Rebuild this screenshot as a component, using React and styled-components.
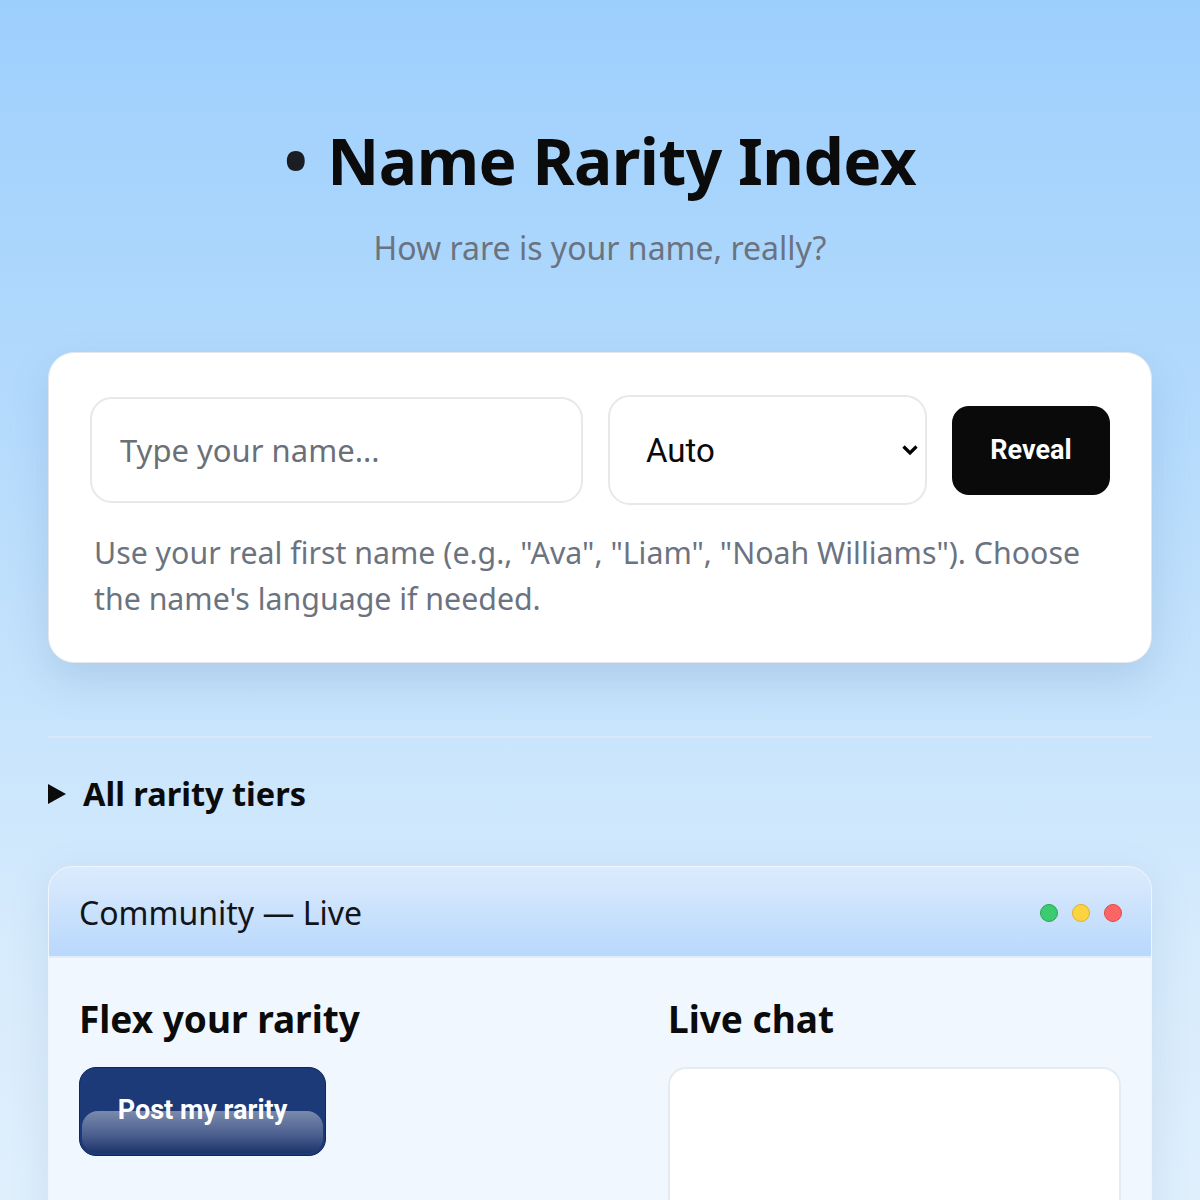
import React from "react";
import styled, { createGlobalStyle } from "styled-components";

const Global = createGlobalStyle`
  html, body { margin: 0; padding: 0; }
  body {
    font-family: "Noto Sans", "Open Sans", sans-serif;
    background: linear-gradient(180deg, #9dcffd 0%, #b9ddfc 40%, #d6ebfc 75%, #e2f0fc 100%);
    min-height: 1200px;
    color: #0b0b0c;
  }
`;

const Page = styled.main`
  width: 1104px;
  margin: 0 auto;
  padding-top: 124px;
`;

const Hero = styled.header`
  text-align: center;
`;

const Title = styled.h1`
  margin: 0;
  font-size: 64px;
  font-weight: 700;
  line-height: 74px;
  letter-spacing: -0.5px;
  color: #0b0b0c;
`;

const Bullet = styled.span`
  color: #1a1d22;
  margin-right: 20px;
`;

const Subtitle = styled.p`
  margin: 28px 0 0;
  font-size: 32px;
  line-height: 44px;
  color: #6b7380;
`;

const Card = styled.section`
  margin-top: 82px;
  background: #ffffff;
  border: 1px solid #e3e7ec;
  border-radius: 26px;
  box-shadow: 0 18px 40px rgba(70, 110, 160, 0.18);
  padding: 42px 41px 40px;
`;

const FormRow = styled.div`
  display: flex;
  align-items: center;
  gap: 25px;
`;

const NameInput = styled.input`
  flex: none;
  width: 493px;
  min-width: 0;
  box-sizing: border-box;
  height: 106px;
  border: 2px solid #e6e8eb;
  border-radius: 22px;
  padding: 0 28px;
  font-family: "Noto Sans", sans-serif;
  font-size: 31px;
  color: #111;
  outline: none;
  &::placeholder { color: #6b6f77; }
`;

const SelectWrap = styled.div`
  position: relative;
  flex: none;
  width: 319px;
`;

const Select = styled.select`
  width: 100%;
  box-sizing: border-box;
  height: 110px;
  border: 2px solid #e6e8eb;
  border-radius: 22px;
  padding: 0 36px;
  font-family: Roboto, sans-serif;
  font-size: 33px;
  color: #0a0a0a;
  background: #fff;
  appearance: none;
  outline: none;
`;

const Chevron = styled.svg`
  position: absolute;
  right: 8px;
  top: 50%;
  transform: translateY(-50%);
  pointer-events: none;
`;

const RevealButton = styled.button`
  flex: none;
  width: 158px;
  height: 89px;
  border: none;
  border-radius: 17px;
  background: #0a0a0a;
  color: #fff;
  font-family: Roboto, sans-serif;
  font-weight: 700;
  font-size: 27px;
`;

const Hint = styled.p`
  margin: 25px 0 0 4px;
  font-size: 30.3px;
  line-height: 46px;
  color: #6b7380;
`;

const Divider = styled.hr`
  margin: 73px 0 0;
  border: none;
  border-top: 2px solid #d9e8f6;
`;

const Tiers = styled.details`
  margin-top: 35px;
`;

const TiersSummary = styled.summary`
  list-style: none;
  display: flex;
  align-items: center;
  gap: 17px;
  font-size: 32.5px;
  font-weight: 700;
  line-height: 42px;
  cursor: pointer;
  &::-webkit-details-marker { display: none; }
`;

const Window = styled.section`
  margin-top: 51px;
  border: 1px solid #eef5fd;
  border-radius: 24px 24px 0 0;
  overflow: hidden;
  background: #f1f7fe;
  box-shadow: 0 10px 40px rgba(80, 120, 170, 0.14);
`;

const WindowBar = styled.div`
  height: 91px;
  display: flex;
  align-items: center;
  justify-content: space-between;
  padding: 2px 29px 0 30px;
  box-sizing: border-box;
  background: linear-gradient(180deg, #dcebfd 0%, #b9d8fc 100%);
  border-bottom: 2px solid #e2edf9;
`;

const WindowTitle = styled.div`
  font-size: 32px;
  color: #111418;
`;

const Dots = styled.div`
  display: flex;
  gap: 14px;
`;

const Dot = styled.span`
  flex: none;
  width: 18px;
  height: 18px;
  box-sizing: border-box;
  border-radius: 50%;
  background: ${(p) => p.$fill};
  border: 1px solid ${(p) => p.$edge};
`;

const WindowBody = styled.div`
  display: grid;
  grid-template-columns: 558px 453px;
  column-gap: 31px;
  padding: 37px 30px 0;
  height: 250px;
`;

const Column = styled.div`
  display: flex;
  flex-direction: column;
  align-items: flex-start;
`;

const SectionHeading = styled.h2`
  margin: 0;
  font-size: 37px;
  font-weight: 700;
  line-height: 48px;
`;

const PostButton = styled.button`
  position: relative;
  margin-top: 24px;
  width: 247px;
  height: 89px;
  border: 1px solid #102757;
  border-radius: 17px;
  background: #1d3a78;
  color: #fff;
  font-family: Roboto, sans-serif;
  font-weight: 700;
  font-size: 27px;
  overflow: hidden;
  padding: 0 0 4px;
  &::after {
    content: "";
    position: absolute;
    left: 2px;
    right: 2px;
    top: 43px;
    bottom: 2px;
    border-radius: 16px 16px 15px 15px;
    background: linear-gradient(180deg, #7a8aac 0%, #4d6190 55%, #1c346a 100%);
  }
`;

const PostLabel = styled.span`
  position: relative;
  z-index: 1;
`;

const ChatBox = styled.div`
  margin-top: 24px;
  box-sizing: border-box;
  width: 100%;
  height: 200px;
  background: #fff;
  border: 2px solid #e5ebf2;
  border-radius: 18px;
`;

export default function App() {
  return (
    <>
      <Global />
      <Page>
        <Hero>
          <Title>
            <Bullet>•</Bullet>Name Rarity Index
          </Title>
          <Subtitle>How rare is your name, really?</Subtitle>
        </Hero>

        <Card>
          <FormRow>
            <NameInput placeholder="Type your name..." />
            <SelectWrap>
              <Select defaultValue="auto">
                <option value="auto">Auto</option>
              </Select>
              <Chevron width="18" height="12" viewBox="0 0 18 12">
                <path d="M2.5 2.5 L9 9 L15.5 2.5" fill="none" stroke="#000" strokeWidth="3.2" />
              </Chevron>
            </SelectWrap>
            <RevealButton>Reveal</RevealButton>
          </FormRow>
          <Hint>
            Use your real first name (e.g., "Ava", "Liam", "Noah Williams"). Choose the name's language if needed.
          </Hint>
        </Card>

        <Divider />

        <Tiers>
          <TiersSummary>
            <svg width="18" height="20" viewBox="0 0 18 20">
              <path d="M0 0 L18 10 L0 20 Z" fill="#0b0b0c" />
            </svg>
            All rarity tiers
          </TiersSummary>
        </Tiers>

        <Window>
          <WindowBar>
            <WindowTitle>Community — Live</WindowTitle>
            <Dots>
              <Dot $fill="#3ccb6e" $edge="#2aa556" />
              <Dot $fill="#fdd33f" $edge="#e0b030" />
              <Dot $fill="#fd6565" $edge="#dc4a4a" />
            </Dots>
          </WindowBar>
          <WindowBody>
            <Column>
              <SectionHeading>Flex your rarity</SectionHeading>
              <PostButton>
                <PostLabel>Post my rarity</PostLabel>
              </PostButton>
            </Column>
            <Column>
              <SectionHeading>Live chat</SectionHeading>
              <ChatBox />
            </Column>
          </WindowBody>
        </Window>
      </Page>
    </>
  );
}
